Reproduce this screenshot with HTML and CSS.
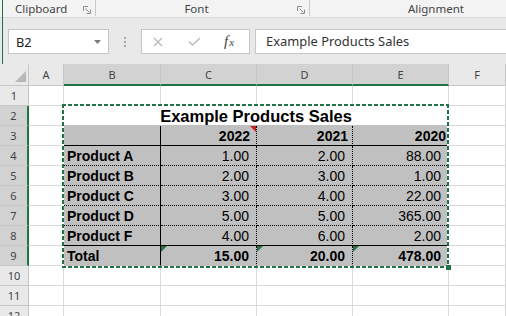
FILE: index.html
```html
<!DOCTYPE html>
<html>
<head>
<meta charset="utf-8">
<link rel="stylesheet" href="styles.css">
</head>
<body>
<div class="app">
  <div class="ribbon">
    <div class="group g-clip"><span class="glabel">Clipboard</span><svg class="launcher" width="8" height="8" viewBox="0 0 8 8"><path d="M0.5 5V0.5H5" fill="none" stroke="#8c8c8c"/><path d="M2.5 2.5L6.5 6.5M3.5 7.5H7.5V3.5" fill="none" stroke="#8c8c8c"/></svg></div>
    <div class="group g-font"><span class="glabel">Font</span><svg class="launcher" width="8" height="8" viewBox="0 0 8 8"><path d="M0.5 5V0.5H5" fill="none" stroke="#8c8c8c"/><path d="M2.5 2.5L6.5 6.5M3.5 7.5H7.5V3.5" fill="none" stroke="#8c8c8c"/></svg></div>
    <div class="group g-align"><span class="glabel">Alignment</span></div>
  </div>
  <div class="fbar">
    <div class="namebox"><span class="nb-text">B2</span><svg width="7" height="4" viewBox="0 0 7 4"><path d="M0 0H7L3.5 4Z" fill="#7a7a7a"/></svg></div>
    <div class="grip"><i></i><i></i><i></i></div>
    <div class="fbtns">
      <svg class="ic-x" width="10" height="10" viewBox="0 0 10 10"><path d="M1 1L9 9M9 1L1 9" stroke="#b9b9b9" stroke-width="1.2"/></svg>
      <svg class="ic-ok" width="13" height="9" viewBox="0 0 13 9"><path d="M1 4.5L4.5 8L12 1" fill="none" stroke="#b9b9b9" stroke-width="1.4"/></svg>
      <span class="fx">f<span class="fx-x">x</span></span>
    </div>
    <div class="finput">Example Products Sales</div>
  </div>
  <div class="sheet">
    <div class="hd corner"><svg width="11" height="11" viewBox="0 0 11 11"><path d="M11 0V11H0Z" fill="#b8b8b8"/></svg></div>
    <div class="hd colh">A</div>
    <div class="hd colh on">B</div>
    <div class="hd colh on">C</div>
    <div class="hd colh on">D</div>
    <div class="hd colh on">E</div>
    <div class="hd colh">F</div>

    <div class="hd rowh">1</div>
    <div class="c"></div><div class="c"></div><div class="c"></div><div class="c"></div><div class="c"></div><div class="c"></div>

    <div class="hd rowh on">2</div>
    <div class="c"></div>
    <div class="c title">Example Products Sales</div>
    <div class="c"></div>

    <div class="hd rowh on">3</div>
    <div class="c"></div>
    <div class="t b-sr b-sb"></div>
    <div class="t num yr22 b-dr b-sb">2022<svg class="note" width="6" height="6" viewBox="0 0 6 6"><path d="M0 0H6V6Z" fill="#c41e1e"/></svg></div>
    <div class="t num yr21 b-dr b-sb">2021</div>
    <div class="t num yr20 b-er b-sb">2020</div>
    <div class="c"></div>

    <div class="hd rowh on">4</div>
    <div class="c"></div>
    <div class="t lab b-sr b-db">Product A</div>
    <div class="t num b-dr b-db">1.00</div>
    <div class="t num b-dr b-db">2.00</div>
    <div class="t num b-er b-db">88.00</div>
    <div class="c"></div>

    <div class="hd rowh on">5</div>
    <div class="c"></div>
    <div class="t lab b-sr b-db">Product B</div>
    <div class="t num b-dr b-db">2.00</div>
    <div class="t num b-dr b-db">3.00</div>
    <div class="t num b-er b-db">1.00</div>
    <div class="c"></div>

    <div class="hd rowh on">6</div>
    <div class="c"></div>
    <div class="t lab b-sr b-db">Product C</div>
    <div class="t num b-dr b-db">3.00</div>
    <div class="t num b-dr b-db">4.00</div>
    <div class="t num b-er b-db">22.00</div>
    <div class="c"></div>

    <div class="hd rowh on">7</div>
    <div class="c"></div>
    <div class="t lab b-sr b-db">Product D</div>
    <div class="t num b-dr b-db">5.00</div>
    <div class="t num b-dr b-db">5.00</div>
    <div class="t num b-er b-db">365.00</div>
    <div class="c"></div>

    <div class="hd rowh on">8</div>
    <div class="c"></div>
    <div class="t lab b-sr b-sb">Product F</div>
    <div class="t num b-dr b-sb">4.00</div>
    <div class="t num b-dr b-sb">6.00</div>
    <div class="t num b-er b-sb">2.00</div>
    <div class="c"></div>

    <div class="hd rowh on">9</div>
    <div class="c"></div>
    <div class="t lab b-sr b-eb">Total</div>
    <div class="t num bold b-dr b-eb"><svg class="err" width="6" height="6" viewBox="0 0 6 6"><path d="M0 0H6L0 6Z" fill="#217346"/></svg>15.00</div>
    <div class="t num bold b-dr b-eb"><svg class="err" width="6" height="6" viewBox="0 0 6 6"><path d="M0 0H6L0 6Z" fill="#217346"/></svg>20.00</div>
    <div class="t num bold b-er b-eb"><svg class="err" width="6" height="6" viewBox="0 0 6 6"><path d="M0 0H6L0 6Z" fill="#217346"/></svg>478.00</div>
    <div class="c"></div>

    <div class="hd rowh">10</div>
    <div class="c"></div><div class="c"></div><div class="c"></div><div class="c"></div><div class="c"></div><div class="c"></div>

    <div class="hd rowh">11</div>
    <div class="c"></div><div class="c"></div><div class="c"></div><div class="c"></div><div class="c"></div><div class="c"></div>

    <div class="hd rowh">12</div>
    <div class="c"></div><div class="c"></div><div class="c"></div><div class="c"></div><div class="c"></div><div class="c"></div>

    <div class="selection"><span class="handle"></span></div>
  </div>
</div>
</body>
</html>
```

FILE: styles.css
```css
* { box-sizing: border-box; }
html, body { margin: 0; padding: 0; }
body {
  width: 506px;
  height: 316px;
  overflow: hidden;
  background: #fff;
  font-family: "Noto Sans", sans-serif;
}
.app { position: relative; }
.app::before {
  content: "";
  position: absolute;
  left: 2px;
  top: 0;
  width: 1px;
  height: 64px;
  background: #217346;
}

/* ribbon group labels */
.ribbon {
  height: 18px;
  background: #f3f3f3;
  border-bottom: 1px solid #dadada;
  display: flex;
  white-space: nowrap;
}
.group {
  display: flex;
  align-items: center;
  height: 16px;
  border-right: 1px solid #c9c9c9;
  flex-shrink: 0;
}
.glabel { font-size: 11.5px; color: #444; }
.g-clip { width: 96px; padding-left: 15px; }
.g-clip .launcher { margin-left: auto; margin-right: 4px; margin-top: 3px; }
.g-font { width: 214px; }
.g-font .glabel { flex: 1; text-align: center; }
.g-font .launcher { margin-right: 4px; margin-top: 3px; }
.g-align { width: 252px; justify-content: center; border-right: none; }

/* formula bar */
.fbar {
  height: 46px;
  background: #e9e9e9;
  display: flex;
  align-items: flex-start;
  padding: 11px 0 0 8px;
}
.namebox {
  width: 101px;
  height: 25px;
  background: #fff;
  border: 1px solid #c6c6c6;
  display: flex;
  align-items: center;
  padding: 0 7px 0 7px;
  font-size: 12.8px;
  color: #222;
}
.nb-text { flex: 1; }
.grip {
  width: 32px;
  height: 25px;
  display: flex;
  flex-direction: column;
  align-items: center;
  gap: 2px;
  padding-top: 8px;
}
.grip i { display: block; width: 2px; height: 2px; background: #a8a8a8; }
.fbtns {
  width: 109px;
  height: 25px;
  background: #fff;
  border: 1px solid #c6c6c6;
  display: flex;
  align-items: center;
  padding-left: 11px;
}
.ic-ok { margin-left: 25px; }
.fx {
  margin-left: 23px;
  font-family: "Liberation Serif", serif;
  font-style: italic;
  font-size: 15px;
  color: #444;
}
.fx-x { font-size: 11px; margin-left: 1px; }
.finput {
  flex: 1;
  margin-left: 5px;
  height: 25px;
  background: #fff;
  border: 1px solid #c6c6c6;
  border-right: none;
  padding-left: 10px;
  font-size: 12.9px;
  line-height: 23px;
  color: #333;
  white-space: nowrap;
}

/* sheet */
.sheet {
  position: relative;
  display: grid;
  grid-template-columns: 29px 35px 97px 96px 96px 96px 57px;
  grid-template-rows: 22px;
  grid-auto-rows: 20px;
}
.sheet > div {
  border-right: 1px solid #dadada;
  border-bottom: 1px solid #dadada;
  position: relative;
  white-space: nowrap;
}
.sheet > .hd {
  background: #e9e9e9;
  border-right-color: #c6c6c6;
  border-bottom-color: #c6c6c6;
  display: flex;
  align-items: center;
  justify-content: center;
  font-size: 11px;
  color: #444;
}
.sheet > .hd.on { background: #d2d2d2; }
.sheet > .colh.on { border-bottom: 2px solid #217346; }
.sheet > .rowh.on { border-right: 2px solid #217346; }
.sheet > .corner {
  justify-content: flex-end;
  align-items: flex-end;
  padding: 0 2px 3px 0;
}

.sheet > .title {
  grid-column: span 4;
  background: #fff;
  border-bottom-color: #c0c0c0;
  display: flex;
  align-items: flex-end;
  justify-content: center;
  font-family: "Liberation Sans", Arial, sans-serif;
  font-weight: bold;
  font-size: 16.5px;
  line-height: 18px;
  color: #000;
}

.sheet > .t {
  background: #c0c0c0;
  display: flex;
  align-items: flex-end;
  font-family: "Liberation Sans", Arial, sans-serif;
  font-size: 14px;
  line-height: 17px;
  color: #000;
}
.sheet > .lab { font-weight: bold; padding-left: 3px; }
.sheet > .num { justify-content: flex-end; padding-right: 7px; }
.sheet > .bold { font-weight: bold; }
.sheet > .yr22 { font-weight: bold; padding-right: 6px; }
.sheet > .yr21 { font-weight: bold; padding-right: 4px; }
.sheet > .yr20 { font-weight: bold; padding-right: 2px; }

.sheet > .b-sr { border-right: 1px solid #000; }
.sheet > .b-dr { border-right: 1px dotted #000; }
.sheet > .b-er { border-right: 1px solid #c0c0c0; }
.sheet > .b-sb { border-bottom: 1px solid #000; }
.sheet > .b-db { border-bottom: 1px dotted #000; }
.sheet > .b-eb { border-bottom: 1px solid #c0c0c0; }

.note { position: absolute; top: 0; right: 0; }
.err { position: absolute; top: 0; left: 0; }

.sheet > .selection {
  position: absolute;
  left: 62px;
  top: 40px;
  width: 387px;
  height: 164px;
  border: none;
  background:
    repeating-linear-gradient(90deg, #217346 0 4px, #fff 4px 6px) left top / 100% 2px no-repeat,
    repeating-linear-gradient(90deg, #217346 0 4px, #fff 4px 6px) left bottom / 100% 2px no-repeat,
    repeating-linear-gradient(180deg, #217346 0 4px, #fff 4px 6px) left top / 2px 100% no-repeat,
    repeating-linear-gradient(180deg, #217346 0 4px, #fff 4px 6px) right top / 2px 100% no-repeat;
  pointer-events: none;
}
.handle {
  position: absolute;
  right: -2px;
  bottom: -2px;
  width: 5px;
  height: 5px;
  background: #217346;
}
```
